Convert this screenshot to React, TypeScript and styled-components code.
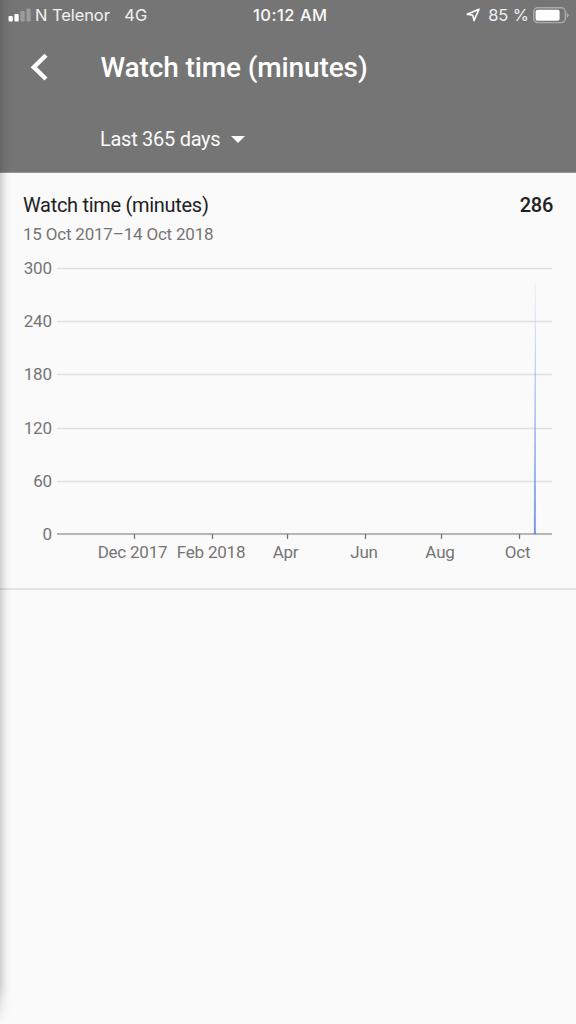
import React from "react";
import styled, { createGlobalStyle } from "styled-components";

const GlobalStyle = createGlobalStyle`
  * { box-sizing: border-box; }
  body { margin: 0; background: #fafafa; }
`;

const Screen = styled.main`
  position: relative;
  width: 576px;
  height: 1024px;
  overflow: hidden;
  background: #fafafa;
  font-family: Roboto, "Liberation Sans", sans-serif;
`;

const EdgeShadow = styled.div`
  position: absolute;
  left: 0;
  top: 0;
  width: 13px;
  height: 100%;
  pointer-events: none;
  background: linear-gradient(to right, rgba(0, 0, 0, 0.17), rgba(0, 0, 0, 0.09) 25%, rgba(0, 0, 0, 0.02) 60%, transparent);
  mask-image: linear-gradient(to bottom, rgba(0, 0, 0, 0.75) 172px, #000 173px, #000 985px, transparent 1024px);
`;

const Header = styled.header`
  height: 173px;
  background: #757575;
  border-bottom: 1px solid #949494;
  color: #fff;
`;

const StatusBar = styled.div`
  display: grid;
  grid-template-columns: 253px 1fr auto;
  align-items: center;
  height: 30px;
  padding: 0 7px 0 0;
  font-family: Inter, sans-serif;
  line-height: 30px;
  color: #f2f2f2;
`;

const Carrier = styled.div`
  display: flex;
  align-items: center;
  padding-left: 8px;
`;

const StatusText = styled.span<{ $gap?: number }>`
  margin-left: ${(p) => p.$gap ?? 0}px;
  font-size: 16.5px;
  letter-spacing: -0.08px;
  white-space: pre;
`;

const Clock = styled.span`
  font-size: 16.5px;
  font-weight: 550;
  letter-spacing: 0.5px;
  color: #fafafa;
`;

const PowerGroup = styled.div`
  display: flex;
  align-items: center;
`;

const BatteryIcon = styled.svg`
  margin-left: 4px;
`;

const TitleBar = styled.div`
  display: flex;
  align-items: center;
  height: 74px;
  padding-left: 30px;
`;

const BackButton = styled.button`
  display: flex;
  width: 70.5px;
  padding: 0;
  border: 0;
  background: none;
  color: inherit;
`;

const Title = styled.h1`
  margin: 0;
  padding-top: 1px;
  font-size: 28px;
  font-weight: 500;
  line-height: 34px;
  letter-spacing: -0.12px;
`;

const PeriodPicker = styled.button`
  display: flex;
  align-items: center;
  gap: 11px;
  height: 26px;
  margin: 22px 0 0 100px;
  padding: 0;
  border: 0;
  background: none;
  color: #fafafa;
  font: 400 20px/26px Roboto, sans-serif;
  letter-spacing: -0.28px;
`;

const Card = styled.section`
  height: 417px;
  padding: 19px 23px 0;
  border-bottom: 2px solid #e3e3e3;
`;

const Summary = styled.div`
  display: flex;
  justify-content: space-between;
  font-size: 20px;
  line-height: 26px;
  letter-spacing: -0.3px;
  color: #212121;
`;

const Metric = styled.h2`
  margin: 0;
  font: inherit;
`;

const Total = styled.strong`
  font-weight: 500;
`;

const DateRange = styled.p`
  margin: 5px 0 0;
  font-size: 17px;
  line-height: 22px;
  letter-spacing: -0.2px;
  color: #757575;
`;

const Chart = styled.svg`
  display: block;
  width: 530px;
  height: 325px;
  font-size: 17px;
  letter-spacing: -0.22px;
  fill: #757575;
`;

const levels = [
  { value: 300, y: 23.5 },
  { value: 240, y: 76.5 },
  { value: 180, y: 129.5 },
  { value: 120, y: 183.5 },
  { value: 60, y: 236.5 },
  { value: 0, y: 289 },
];

const months = [
  { label: "Dec 2017", tick: 111.5, x: 109.5 },
  { label: "Feb 2018", tick: 189.5, x: 188 },
  { label: "Apr", tick: 264.5, x: 262.5 },
  { label: "Jun", tick: 342.5, x: 341 },
  { label: "Aug", tick: 418.5, x: 417 },
  { label: "Oct", tick: 496.5, x: 494.5 },
];

function WatchTimeChart() {
  return (
    <Chart viewBox="0 0 530 325">
      <defs>
        <linearGradient id="spike" x1="0" y1="38" x2="0" y2="289" gradientUnits="userSpaceOnUse">
          <stop offset="0" stopColor="#5981e8" stopOpacity="0.15" />
          <stop offset="0.5" stopColor="#5981e8" stopOpacity="0.65" />
          <stop offset="1" stopColor="#4f79e6" stopOpacity="0.95" />
        </linearGradient>
      </defs>
      {levels.map(({ value, y }) => (
        <g key={value}>
          <text x="28.8" y={y + 5.5} textAnchor="end">{value}</text>
          {value > 0 && <path d={`M34 ${y}H529`} stroke="#e0e0e0" strokeWidth="1.5" />}
        </g>
      ))}
      <path d="M34 289H529" stroke="#9e9e9e" strokeWidth="1.7" />
      {months.map(({ label, tick, x }) => (
        <g key={label}>
          <path d={`M${tick} 289V294`} stroke="#757575" strokeWidth="1.3" />
          <text x={x} y="313" textAnchor="middle">{label}</text>
        </g>
      ))}
      <path d="M512.3 38L512.6 289H511.2Z" fill="url(#spike)" stroke="url(#spike)" strokeWidth="0.3" />
    </Chart>
  );
}

export default function App() {
  return (
    <Screen>
      <GlobalStyle />
      <Header>
        <StatusBar>
          <Carrier>
            <svg width="24" height="15" viewBox="0 0 24 15" fill="#fff">
              <rect x="0.5" y="8" width="4.3" height="5.5" rx="1" />
              <rect x="6.4" y="6" width="4.3" height="7.5" rx="1" />
              <rect x="12.4" y="3" width="4.3" height="10.5" rx="1" opacity="0.28" />
              <rect x="18.4" y="0.5" width="4.3" height="13" rx="1" opacity="0.28" />
            </svg>
            <StatusText $gap={3}>N Telenor</StatusText>
            <StatusText $gap={14.5}>4G</StatusText>
          </Carrier>
          <Clock>10:12 AM</Clock>
          <PowerGroup>
            <svg width="14" height="14" viewBox="0 0 14 14" fill="none" stroke="#fff" strokeWidth="1.6" strokeLinejoin="round">
              <path d="M13 1.2L1.2 6.2L6.8 7.2L8 12.6Z" />
            </svg>
            <StatusText $gap={8}>85 %</StatusText>
            <BatteryIcon width="36" height="17" viewBox="0 0 36 17">
              <rect x="0.8" y="0.8" width="31.5" height="14.8" rx="4" fill="none" stroke="#aaa" strokeWidth="1.4" />
              <rect x="2.6" y="2.7" width="24" height="11" rx="1.8" fill="#fff" />
              <path d="M33.7 5.4Q35.7 6.4 35.7 8.2T33.7 11Z" fill="#aaa" />
            </BatteryIcon>
          </PowerGroup>
        </StatusBar>
        <TitleBar>
          <BackButton aria-label="Back">
            <svg width="20" height="28" viewBox="0 0 20 28" fill="none" stroke="#fff" strokeWidth="4.4">
              <path d="M16 2.2L3.8 14.2L16 26" />
            </svg>
          </BackButton>
          <Title>Watch time (minutes)</Title>
        </TitleBar>
        <PeriodPicker>
          Last 365 days
          <svg width="14" height="7" viewBox="0 0 14 7" fill="#fafafa">
            <path d="M0 0H14L7 7Z" />
          </svg>
        </PeriodPicker>
      </Header>
      <Card>
        <Summary>
          <Metric>Watch time (minutes)</Metric>
          <Total>286</Total>
        </Summary>
        <DateRange>15 Oct 2017–14 Oct 2018</DateRange>
        <WatchTimeChart />
      </Card>
      <EdgeShadow />
    </Screen>
  );
}
